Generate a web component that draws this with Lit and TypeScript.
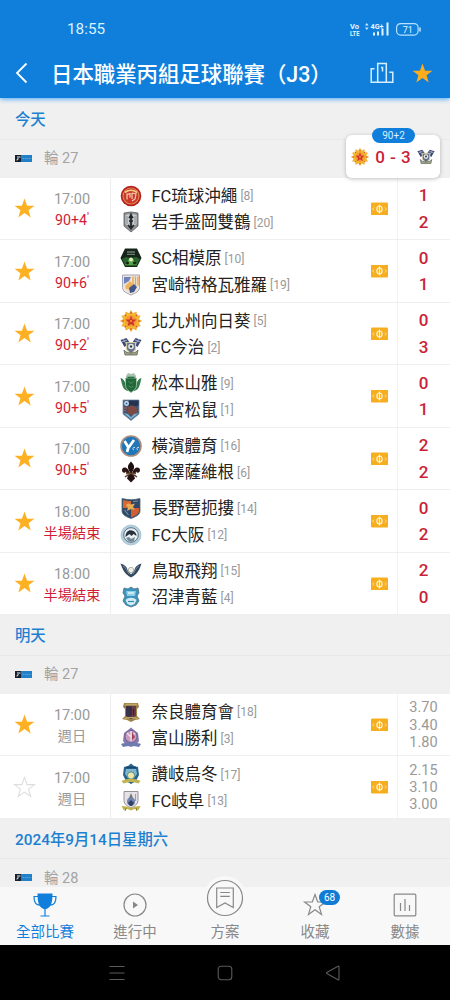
import { LitElement, html, css, svg } from 'lit';
import type { SVGTemplateResult } from 'lit';
import { customElement, property } from 'lit/decorators.js';
import { classMap } from 'lit/directives/class-map.js';

interface Team {
  name: string;
  rank: number;
  crest: string;
}

interface Match {
  time: string;
  status: string;
  minute?: boolean;
  live: boolean;
  starred: boolean;
  home: Team;
  away: Team;
  values: string[];
}

interface Section {
  title: string;
  round: string;
  matches: Match[];
}

const team = (name: string, rank: number, crest: string): Team => ({ name, rank, crest });

const live = (time: string, status: string, home: Team, away: Team, values: string[]): Match => ({
  time,
  status,
  minute: status.includes('+'),
  live: true,
  starred: true,
  home,
  away,
  values,
});

const SECTIONS: Section[] = [
  {
    title: '今天',
    round: '輪 27',
    matches: [
      live('17:00', '90+4', team('FC琉球沖繩', 8, 'ryukyu'), team('岩手盛岡雙鶴', 20, 'iwate'), ['1', '2']),
      live('17:00', '90+6', team('SC相模原', 10, 'sagamihara'), team('宮崎特格瓦雅羅', 19, 'miyazaki'), ['0', '1']),
      live('17:00', '90+2', team('北九州向日葵', 5, 'kitakyushu'), team('FC今治', 2, 'imabari'), ['0', '3']),
      live('17:00', '90+5', team('松本山雅', 9, 'matsumoto'), team('大宮松鼠', 1, 'omiya'), ['0', '1']),
      live('17:00', '90+5', team('橫濱體育', 16, 'yokohama'), team('金澤薩維根', 6, 'kanazawa'), ['2', '2']),
      live('18:00', '半場結束', team('長野琶扼摟', 14, 'nagano'), team('FC大阪', 12, 'osaka'), ['0', '2']),
      live('18:00', '半場結束', team('鳥取飛翔', 15, 'tottori'), team('沼津青藍', 4, 'numazu'), ['2', '0']),
    ],
  },
  {
    title: '明天',
    round: '輪 27',
    matches: [
      {
        time: '17:00',
        status: '週日',
        live: false,
        starred: true,
        home: team('奈良體育會', 18, 'nara'),
        away: team('富山勝利', 3, 'toyama'),
        values: ['3.70', '3.40', '1.80'],
      },
      {
        time: '17:00',
        status: '週日',
        live: false,
        starred: false,
        home: team('讚岐烏冬', 17, 'sanuki'),
        away: team('FC岐阜', 13, 'gifu'),
        values: ['2.15', '3.10', '3.00'],
      },
    ],
  },
  { title: '2024年9月14日星期六', round: '輪 28', matches: [] },
];

// All crests are drawn on a 22x22 grid.
const CRESTS: Record<string, SVGTemplateResult> = {
  ryukyu: svg`
    <circle cx="11" cy="11" r="10.300" fill="#b5201f"/>
    <circle cx="11" cy="11" r="8" fill="#c9382b" stroke="#e0894f" stroke-width="1.200"/>
    <path d="M5 7.500Q11 3 17 7.500" fill="none" stroke="#f3d08a" stroke-width="1.600"/>
    <path d="M7 8.500v6M7 9.500l3-1v4M12 8l4 1-1 5-3 2M12 8v6" fill="none" stroke="#f6d0b0" stroke-width="1.200"/>`,
  iwate: svg`
    <path d="M4 2l7-1 7 1v13l-7 6-7-6z" fill="#8e9294"/>
    <path d="M5.500 4l4-1v13l-4-3zM12.500 3l4 1v9l-4 3z" fill="#c9cccd"/>
    <path d="M11 2.500v16M9 7l2-2.500L13 7M8 14l3 3.500 3-3.500M9 10h4" fill="none" stroke="#23272a" stroke-width="1.700"/>
    <path d="M7 5v8M15 5v8" stroke="#7d8284" stroke-width=".8"/>
    <path d="M4 2l7-1 7 1v13l-7 6-7-6z" fill="none" stroke="#55595b" stroke-width=".8"/>`,
  sagamihara: svg`
    <path d="M5 1.500h12L21.500 11 17 20H5L.5 11z" fill="#15251a"/>
    <path d="M2 12l4-2 5 1 5-1 4 2-3.500 7h-11z" fill="#28632c"/>
    <path d="M5 18l4-6h4l4 6z" fill="#54a444"/>
    <circle cx="11" cy="12.500" r="2" fill="#e4efc0"/>
    <path d="M7 5h8M7 7.300h8" stroke="#6f7b70" stroke-width="1.300"/>
    <circle cx="7.500" cy="16" r="1.500" fill="#122016"/><circle cx="14.500" cy="16" r="1.500" fill="#122016"/>`,
  miyazaki: svg`
    <path d="M2.500 1h17v12.500c0 4-4 5.500-8.500 7.500-4.500-2-8.500-3.500-8.500-7.500z" fill="#eee5d9" stroke="#9b9cb4" stroke-width=".9"/>
    <path d="M4 3h7l-2 4-5 3z" fill="#6d82b8"/>
    <path d="M13 2.500v8M15.500 2.500v9M18 2.500v9" stroke="#e8a04b" stroke-width="1.300"/>
    <path d="M5 12l5-5 3 3-3 6-4-1z" fill="#efb35a"/>
    <path d="M9 14l5-4 3 3-3 5-4 1z" fill="#44558e"/>`,
  kitakyushu: svg`
    <path d="M11 .5l1.800 3.300L16.200 2l.1 3.800 3.800.1-1.800 3.300 3.200 1.800-3.200 1.800 1.800 3.300-3.800.1-.1 3.800-3.400-1.800L11 21.500l-1.800-3.300L5.800 20l-.1-3.800-3.800-.1 1.800-3.300L.5 11l3.200-1.800-1.800-3.300 3.800-.1L5.800 2l3.400 1.800z" fill="#f3ba2c" stroke="#eba02a" stroke-width=".7"/>
    <circle cx="11" cy="11" r="5.800" fill="#f29a38"/>
    <path d="M11 5.500l1.400 4 4.200.1-3.300 2.600 1.200 4.100-3.500-2.400-3.500 2.400 1.200-4.100-3.300-2.600 4.200-.1z" fill="#cf3327"/>
    <path d="M11 2v2M11 18v2M2 11h2M18 11h2M4.700 4.700l1.500 1.500M17.300 4.700l-1.500 1.500M4.700 17.300l1.500-1.500M17.300 17.300l-1.500-1.500" stroke="#da4a26" stroke-width="1.100"/>
    <circle cx="11" cy="11" r="1.200" fill="#f08a38"/>`,
  imabari: svg`
    <path d="M.5 4l6-2 3.500 5-5.500 4zM21.500 4l-6-2L12 7l5.500 4z" fill="#3b4a74"/>
    <path d="M3 3l4 6M19 3l-4 6M1.500 6L7 4M20.500 6L15 4" stroke="#bdc4d1" stroke-width=".8"/>
    <path d="M6.500 6.500h9v7L11 18l-4.500-4.500z" fill="#62708c" stroke="#d2cba9" stroke-width="1.200"/>
    <circle cx="11" cy="10.500" r="2.800" fill="#e9e7d9"/><circle cx="11" cy="10.500" r="1.200" fill="#2c3d69"/>
    <path d="M4 14c2 4 12 4 14 0l-1 5H5z" fill="#a7a57c" stroke="#57645e" stroke-width=".8"/>`,
  matsumoto: svg`
    <path d="M6 4l2-3 3 1 3-1 2 3v4H6z" fill="#a8c2ad"/>
    <path d="M.5 6C5 7 4 11 8 13v6C2 18 2 11 .5 6zM21.500 6C17 7 18 11 14 13v6c6-1 6-8 7.500-13z" fill="#347a4c"/>
    <path d="M5.500 6h11v7c0 4-3 6-5.500 7.500C8.500 19 5.500 17 5.500 13z" fill="#20683c" stroke="#a8c6a6" stroke-width=".8"/>
    <path d="M8.500 9.500l2.500 2 2.500-2M8.500 14l2.500 1.500 2.500-1.500" fill="none" stroke="#5c9769" stroke-width=".8"/>
    <path d="M7.500 5.500h7" stroke="#2a6e44" stroke-width="1.600"/>`,
  omiya: svg`
    <path d="M3 1h16v14l-8 6.500L3 15z" fill="#3d5475" stroke="#7a8fa9" stroke-width=".8"/>
    <path d="M9 1.500h9.500v5L9 8z" fill="#253352"/><circle cx="6.500" cy="4.500" r="2.400" fill="#d3e4f1"/>
    <circle cx="6.500" cy="4.500" r="1" fill="#2c5d93"/>
    <path d="M8 8c4-3 10-1 9 5l-4 4-7-4c2-1 2-3 2-5z" fill="#7d4b43"/>
    <path d="M3.500 14l4.500 1 3 3 3-3 4.500-1-7.500 6.500z" fill="#7bb1d3"/>
    <path d="M4 9h3M4 11.500h2" stroke="#cf5c37" stroke-width="1.200"/>`,
  yokohama: svg`
    <circle cx="11" cy="11" r="10" fill="#1f76b8" stroke="#a98c7d" stroke-width="1.600"/>
    <path d="M4.500 6l4 6.500L14 5M8.500 12l-1.500 5" fill="none" stroke="#fff" stroke-width="2.700"/>
    <path d="M15 12.500c-2-1-3 2-1 2.500M19 12.500c-2-1-3 2-1 2.500" fill="none" stroke="#cfe3f1" stroke-width="1"/>`,
  kanazawa: svg`
    <path d="M11 .5c4 4 3.500 6 1.800 9.500H9.200C7.500 6.500 7 4.500 11 .5z" fill="#1e1010"/>
    <path d="M9.500 12C9 6 2 4.500 2 9c0 3 3 3.500 4 1.500 0 2 1 3 3 3zM12.500 12c.5-6 7.500-7.500 7.500-3 0 3-3 3.500-4 1.500 0 2-1 3-3 3z" fill="#291313"/>
    <path d="M9.500 9h3v5h-3z" fill="#241211"/>
    <path d="M6 12.500h10" stroke="#6d4a2a" stroke-width="1.600"/>
    <path d="M8.500 13.500h5l1.500 4-4 4-4-4z" fill="#241211"/>
    <path d="M5 16l3-2M17 16l-3-2" stroke="#5e2f25" stroke-width="1.500"/>`,
  nagano: svg`
    <path d="M2 1.500c6 1.500 12 1.500 18 0V14c0 4-5 6-9 7.500C7 20 2 18 2 14z" fill="#2f4866" stroke="#596775" stroke-width=".8"/>
    <path d="M3 3c3 .7 5 1 8 1v7H3z" fill="#d56a35"/><path d="M11 11h8v3c0 3-4 5-8 6.500z" fill="#ce5f35"/>
    <path d="M6 9c1-3 3-3 5-1.500l4-1-2 3.500 2 3-4-1-4 2 1-4z" fill="#e6ad55"/>
    <path d="M13 4.500l5-.5M4.500 13l4 5" stroke="#7094a8" stroke-width="1.200"/>`,
  osaka: svg`
    <circle cx="11" cy="11" r="10" fill="#b5d0de" stroke="#9fbecd" stroke-width=".8"/>
    <circle cx="11" cy="11" r="7.300" fill="#e9f1f4" stroke="#5a6f80" stroke-width="1"/>
    <path d="M5.500 13c0-6 4-8 8-6 2 1 3 3 3 5l-3-2-2 2-2-2z" fill="#28313e"/>
    <path d="M6 14l3-1 2 2 4-2-1 4c-3 1.500-6 .5-8-3z" fill="#718995"/>`,
  tottori: svg`
    <path d="M.5 3.500c4 1 6.300 3 7.300 7l3.200 4 3.200-4c1-4 3.300-6 7.300-7-2 6-4 10-8 12.500l-2.500 1.500L8.500 16C4.500 13.500 2.500 9 .5 3.500z" fill="#34485e"/>
    <path d="M3 6c3 1.500 4 5 6 8M19 6c-3 1.500-4 5-6 8" fill="none" stroke="#8c9dac" stroke-width=".8"/>
    <circle cx="11" cy="10" r="2.700" fill="#eff0ec" stroke="#9a9c88" stroke-width=".7"/>`,
  numazu: svg`
    <path d="M4 2l4 1 3-2 3 2 4-1 1 5-2 3 2 5-3 4-5 2-5-2-3-4 2-5-2-3z" fill="#3b94bd" stroke="#57788d" stroke-width=".9"/>
    <path d="M6 5h10l-1 5H7z" fill="#8fcfe6"/><path d="M8 7h6" stroke="#e8f6fa" stroke-width="1.400"/>
    <path d="M5.500 14c3-3 8-3 11 0l-2 4-3.500 1.500L7.500 18z" fill="#d4ecf3"/>
    <path d="M8 15.500h6" stroke="#3789ac" stroke-width="1.200"/>`,
  nara: svg`
    <path d="M4 2h14l1 4-2 2v7l3 3-5 1-4 2-4-2-5-1 3-3V8L3 6z" fill="#9c824a"/>
    <path d="M6 5h5v13l-5-3z" fill="#39324a"/><path d="M11 5h5v10l-5 3z" fill="#6c3a44"/>
    <path d="M11 6v11M13.500 8v6" stroke="#26273d" stroke-width="1.100"/>
    <path d="M5 3.500h12M4 18c4-2 10-2 14 0" fill="none" stroke="#c1a565" stroke-width="1.400"/>`,
  toyama: svg`
    <path d="M8 3l3-2.500L14 3l4 3 1 8-3 4-5 2-5-2-3-4 1-8z" fill="#8878ad"/>
    <circle cx="11" cy="9.500" r="6" fill="#c99cbd" stroke="#5c5c91" stroke-width=".9"/>
    <path d="M11 4v10M7 6l4 4 4-4" fill="none" stroke="#f0dbe5" stroke-width="1.400"/>
    <path d="M12 5l3 5-3 3z" fill="#a3415b"/>
    <path d="M1 17c6-2 14-2 20 0l-2 3c-5-1.500-11-1.500-16 0z" fill="#6f7ab0"/>`,
  sanuki: svg`
    <path d="M4 4l4-1 3-2.500L14 3l4 1 1 8-3 6-5 3-5-3-3-6z" fill="#28638f"/>
    <path d="M6 6h10l1 5-3 4H8l-3-4z" fill="#7fb6cb"/>
    <circle cx="11" cy="12.500" r="3.600" fill="#ece9a8" stroke="#467d84" stroke-width=".8"/>
    <path d="M1.500 18c6-3 13-3 19 0l-2 2.500c-5-2-10-2-15 0z" fill="#c1b354"/>
    <path d="M6 4.500h10" stroke="#13466e" stroke-width="1.500"/>`,
  gifu: svg`
    <path d="M4 1.500h14v9c0 4-4 6-7 7.500-3-1.500-7-3.500-7-7.500z" fill="#e4e2e6" stroke="#8d858a" stroke-width=".9"/>
    <path d="M11 3l2 5H9z" fill="#747276"/><circle cx="11" cy="11.500" r="4" fill="#6e82ad"/>
    <path d="M8 13l3-3 3 3-2 3h-2z" fill="#324367"/><path d="M15.500 4v7" stroke="#c88c91" stroke-width="1"/>
    <path d="M1.500 16l5 .5 4.500 1.500 4.500-1.500 5-.5-2 4-4-1-3.500 1.500L7.500 19l-4 1z" fill="#c2b448"/>
    <path d="M6 18l-1 3M16 18l1 3" stroke="#85812f" stroke-width="1"/>`,
};

const crest = (name: string, cls = 'crest') => html`<svg class=${cls} viewBox="0 0 22 22">${CRESTS[name]}</svg>`;

const STAR = 'M12 1.500l2.700 7.500h7.700l-6.200 4.700 2.300 7.700L12 16.800l-6.500 4.600 2.300-7.700L1.600 9h7.700z';

const star = (on: boolean) => html`
  <svg class=${classMap({ star: true, on })} viewBox="0 0 24 24"><path d=${STAR} /></svg>
`;

@customElement('match-row')
export class MatchRow extends LitElement {
  @property({ attribute: false }) match!: Match;

  static styles = css`
    :host {
      display: grid;
      grid-template-columns: 34px 77px 1fr 36px 53px;
      height: 62.5px;
      box-sizing: border-box;
      border-bottom: 1px solid #eee;
      background: #fff;
      align-items: center;
    }

    .star {
      width: 23px;
      height: 23px;
      margin-left: 12.5px;
      padding-top: 1px;
      fill: none;
      stroke: #ddd;
      stroke-width: 1.1;
    }

    .star.on {
      fill: #fdb022;
      stroke: none;
    }

    .when {
      text-align: center;
      font-size: 14.5px;
      line-height: 20px;
      color: #999;
      align-self: stretch;
      display: flex;
      flex-direction: column;
      justify-content: center;
      border-right: 1px solid #eee;
      box-sizing: border-box;
      padding-top: 3.5px;
    }

    .status {
      font-size: 14.2px;
    }

    .live .status {
      color: #d11c36;
    }

    .tick {
      font-size: 12px;
      line-height: 0;
      vertical-align: 3px;
    }

    .teams {
      padding: 1px 0 0 9px;
    }

    .team {
      display: flex;
      align-items: center;
      height: 26.5px;
      font-size: 16.5px;
      line-height: 24px;
      color: #222;
      white-space: nowrap;
    }

    .name {
      padding-top: 2px;
    }

    .crest {
      width: 22px;
      height: 22px;
      margin-right: 9.5px;
    }

    .rank {
      font-size: 12px;
      color: #999;
      margin-left: 3px;
      padding-top: 1px;
    }

    .ticket {
      width: 17px;
      height: 13px;
      margin-left: 10px;
      padding-top: 0.5px;
    }

    .values {
      align-self: stretch;
      display: flex;
      flex-direction: column;
      align-items: center;
      justify-content: center;
      border-left: 1px solid #f2f2f2;
      font-size: 14.5px;
      line-height: 17.2px;
      color: #999;
      padding: 2px 1px 0 0;
    }

    .values.live {
      font-size: 17px;
      font-weight: 500;
      line-height: 26.5px;
      color: #c91f37;
      padding-top: 1px;
    }
  `;

  private _team(t: Team) {
    return html`
      <div class="team">
        ${crest(t.crest)}<span class="name">${t.name}</span><span class="rank">[${t.rank}]</span>
      </div>
    `;
  }

  render() {
    const m = this.match;
    return html`
      ${star(m.starred)}
      <div class=${classMap({ when: true, live: m.live })}>
        <span>${m.time}</span>
        <span class="status">${m.status}${m.minute ? html`<span class="tick">'</span>` : ''}</span>
      </div>
      <div class="teams">${this._team(m.home)}${this._team(m.away)}</div>
      <svg class="ticket" viewBox="0 0 17 13">
        <rect width="17" height="13" rx="1.200" fill="#f7ae1e" />
        <ellipse cx="8.500" cy="6.500" rx="2.600" ry="3" fill="none" stroke="#fff3d6" stroke-width="1.200" />
        <path d="M8.500 2v9" stroke="#fff3d6" stroke-width="1.200" />
        <path d="M3 5L1.700 6.500 3 8M14 5l1.300 1.500L14 8" fill="none" stroke="#fde3a6" stroke-width=".9" />
      </svg>
      <div class=${classMap({ values: true, live: m.live })}>${m.values.map((v) => html`<span>${v}</span>`)}</div>
    `;
  }
}

@customElement('app-header')
export class AppHeader extends LitElement {
  static styles = css`
    :host {
      display: block;
      height: 98px;
      background: #107fdc;
      color: #fff;
      box-shadow: 0 1px 5px #4aa7f5;
      position: relative;
      z-index: 1;
    }

    .status {
      display: flex;
      align-items: center;
      height: 48px;
      padding: 10px 28px 0 67px;
      box-sizing: border-box;
      font-size: 15.3px;
      color: #d9f3ff;
    }

    .signals {
      width: 73px;
      height: 16px;
      margin-left: auto;
    }

    .signals text {
      fill: #e4f6ff;
      font-weight: 700;
    }

    .signals .level {
      font-weight: 400;
    }

    .toolbar {
      display: flex;
      align-items: center;
      height: 50px;
      padding: 0 16px 0 15px;
    }

    .back {
      width: 13px;
      height: 22px;
      margin-right: 23px;
    }

    h1 {
      flex: 1;
      margin: 0;
      padding-top: 3px;
      font-size: 21.4px;
      font-weight: 500;
      line-height: 30px;
      white-space: nowrap;
    }

    .podium {
      width: 24px;
      height: 22px;
      margin-right: 17px;
    }

    .star {
      width: 23px;
      height: 23px;
      fill: #fdac1c;
    }
  `;

  render() {
    return html`
      <div class="status">
        <span>18:55</span>
        <svg class="signals" viewBox="0 0 73 16">
          <text x="1" y="7.500" font-size="7.500" textLength="9" lengthAdjust="spacingAndGlyphs">Vo</text>
          <text x="1" y="14.500" font-size="7.500" textLength="9.500" lengthAdjust="spacingAndGlyphs">LTE</text>
          <path d="M16 4.500l1.800-2.500 1.800 2.500zM16 6.500l1.800 2.500 1.800-2.500z" fill="#c9ebff" />
          <text x="21.500" y="8" font-size="8" textLength="13" lengthAdjust="spacingAndGlyphs">4G+</text>
          <path d="M25 14.500v-3M29 14.500v-4M33.500 14.500v-7M38.500 14.500v-13" stroke="#e0f4ff" stroke-width="2" />
          <rect x="47.600" y="2.600" width="21.500" height="11.500" rx="4" fill="none" stroke="#b6e2fb" stroke-width="1.200" />
          <path d="M71 6.500v4" stroke="#b6e2fb" stroke-width="1.600" />
          <text class="level" x="53.800" y="11.700" font-size="9">71</text>
        </svg>
      </div>
      <div class="toolbar">
        <svg class="back" viewBox="0 0 13 22" fill="none" stroke="#fff" stroke-width="1.800">
          <path d="M11.500 1.500L2 11l9.500 9.500" />
        </svg>
        <h1>日本職業丙組足球聯賽（J3）</h1>
        <svg class="podium" viewBox="0 0 24 22" fill="none" stroke="#d6efff" stroke-width="1.500">
          <path d="M4.500 6.800H1.200v13.500h21.600v-10h-3.500M7.700 20V1.500h8.600V20M11 5.500h1.500V9.500" />
        </svg>
        <svg class="star" viewBox="0 0 24 24"><path d=${STAR} /></svg>
      </div>
    `;
  }
}

@customElement('app-nav')
export class AppNav extends LitElement {
  static styles = css`
    :host {
      display: grid;
      grid-template-columns: repeat(5, 1fr);
      grid-template-rows: 58px;
      height: 58px;
      background: #f8f8f8;
      color: #888;
      font-size: 14.5px;
      line-height: 20px;
      position: relative;
    }

    .tab {
      display: flex;
      flex-direction: column;
      align-items: center;
      justify-content: flex-end;
      min-height: 0;
      box-sizing: border-box;
      padding-bottom: 2.5px;
      gap: 5.5px;
    }

    .tab.active {
      color: #107fdc;
    }

    svg {
      width: 24px;
      height: 24px;
      fill: none;
      stroke: currentColor;
      stroke-width: 1.2;
      display: block;
      overflow: visible;
    }

    .bump {
      background: #f8f8f8;
      border-radius: 50%;
      padding: 3px;
      margin-bottom: -3px;
    }

    .bump svg {
      width: 38px;
      height: 38px;
    }

    .icon {
      position: relative;
    }

    .badge {
      position: absolute;
      left: 16px;
      top: -3px;
      width: 21px;
      height: 15px;
      border-radius: 8px;
      background: #107bd4;
      color: #fff;
      font-size: 10px;
      line-height: 15px;
      text-align: center;
    }
  `;

  render() {
    return html`
      <div class="tab active">
        <svg viewBox="0 0 24 24">
          <path d="M4.500.5h15c0 8-1 13-5.500 15.200-1.300.6-2.700.6-4 0C5.500 13.500 4.500 8.500 4.500.5z" fill="currentColor" stroke="none" />
          <path d="M5 3.500H1C1 8 2 12.200 7 12.200M19 3.500h4c0 4.500-1 8.700-6 8.700M12 15v7.500M7.500 23h9" />
        </svg>
        <span>全部比賽</span>
      </div>
      <div class="tab">
        <svg viewBox="0 0 24 24">
          <circle cx="12" cy="12" r="11" />
          <path d="M10 8.500l5 3.500-5 3.500z" fill="currentColor" stroke="none" />
        </svg>
        <span>進行中</span>
      </div>
      <div class="tab">
        <div class="bump">
          <svg viewBox="0 0 38 38">
            <circle cx="19" cy="19" r="17.500" />
            <path d="M10.700 9h16.600v19.500L19 24l-8.300 4.500zM14.200 13.500h9.600M14.200 17.300h9.600" />
          </svg>
        </div>
        <span>方案</span>
      </div>
      <div class="tab">
        <div class="icon">
          <svg viewBox="0 0 24 24"><path d=${STAR} /></svg>
          <span class="badge">68</span>
        </div>
        <span>收藏</span>
      </div>
      <div class="tab">
        <svg viewBox="0 0 24 24">
          <rect x="1.200" y="1.200" width="21.600" height="21.600" rx="1" />
          <path d="M7.500 10v8M12 6v12M16.500 12v6" />
        </svg>
        <span>數據</span>
      </div>
    `;
  }
}

@customElement('app-root')
export class AppRoot extends LitElement {
  static styles = css`
    :host {
      display: flex;
      flex-direction: column;
      position: relative;
      width: 450px;
      height: 1000px;
      overflow: hidden;
      background: #f0f0f0;
      font-family: Roboto, 'Noto Sans CJK TC', sans-serif;
    }

    .list {
      flex: 1;
      min-height: 0;
      overflow: hidden;
      padding-top: 1px;
    }

    .date {
      height: 40.5px;
      box-sizing: border-box;
      padding: 1px 0 0 15px;
      border-bottom: 1px solid #e8e8e8;
      color: #1c80d0;
      font-size: 15.35px;
      font-weight: 500;
      line-height: 40px;
    }

    .round {
      display: flex;
      align-items: center;
      height: 38px;
      box-sizing: border-box;
      padding: 0 0 1px 15px;
      color: #a3a3a3;
      font-size: 14.5px;
      line-height: 16px;
    }

    .round-name {
      padding-top: 2px;
    }

    .league {
      width: 17px;
      height: 7px;
      margin-right: 12px;
    }

    .pinned {
      position: absolute;
      left: 346px;
      top: 135px;
      width: 94px;
      height: 43px;
      box-sizing: border-box;
      padding: 0 5px;
      border-radius: 6px;
      background: #fff;
      box-shadow: 0 1px 4px rgba(0, 0, 0, 0.25);
      display: flex;
      align-items: center;
      justify-content: space-between;
      color: #c91f37;
      font-size: 17px;
      font-weight: 500;
      word-spacing: 1px;
    }

    .pinned-crest {
      width: 18px;
      height: 18px;
    }

    .minute {
      position: absolute;
      left: 26px;
      top: -7px;
      width: 43px;
      height: 14.5px;
      border-radius: 8px;
      background: #107fdc;
      color: #d9f0ff;
      font-size: 10px;
      font-weight: 400;
      line-height: 15px;
      text-align: center;
    }

    .system {
      display: flex;
      align-items: center;
      justify-content: center;
      gap: 92px;
      height: 55px;
      background: #000;
    }

    .system svg {
      width: 16px;
      height: 16px;
      fill: none;
      stroke: #5a5a5a;
      stroke-width: 1.1;
    }
  `;

  private _section(s: Section) {
    return html`
      <div class="date">${s.title}</div>
      <div class="round">
        <svg class="league" viewBox="0 0 17 7">
          <rect width="17" height="7" fill="#2180c8" />
          <rect width="6" height="7" fill="#17202e" />
          <path d="M3 1v3.500L1.500 5M4 2h1.500" fill="none" stroke="#e9eef2" stroke-width="1" />
          <path d="M7.500 3.500h8" stroke="#5aa4d8" stroke-width="1.200" stroke-dasharray="1.500 .7" />
        </svg>
        <span class="round-name">${s.round}</span>
      </div>
      ${s.matches.map((m) => html`<match-row .match=${m}></match-row>`)}
    `;
  }

  render() {
    return html`
      <app-header></app-header>
      <div class="list">${SECTIONS.map((s) => this._section(s))}</div>
      <div class="pinned">
        <span class="minute">90+2</span>
        ${crest('kitakyushu', 'pinned-crest')}
        <span>0 - 3</span>
        ${crest('imabari', 'pinned-crest')}
      </div>
      <app-nav></app-nav>
      <div class="system">
        <svg viewBox="0 0 16 16"><path d="M.5 1.500h15M.5 8h15M.5 14.500h15" /></svg>
        <svg viewBox="0 0 16 16"><rect x="1.200" y="1.200" width="13.600" height="13.600" rx="3" /></svg>
        <svg viewBox="0 0 16 16"><path d="M14 1.800v12.400c0 .6-.5.800-1 .5L1.800 8.500c-.5-.3-.5-.7 0-1L13 1.300c.5-.3 1-.1 1 .5z" /></svg>
      </div>
    `;
  }
}

declare global {
  interface HTMLElementTagNameMap {
    'app-root': AppRoot;
    'app-header': AppHeader;
    'app-nav': AppNav;
    'match-row': MatchRow;
  }
}
